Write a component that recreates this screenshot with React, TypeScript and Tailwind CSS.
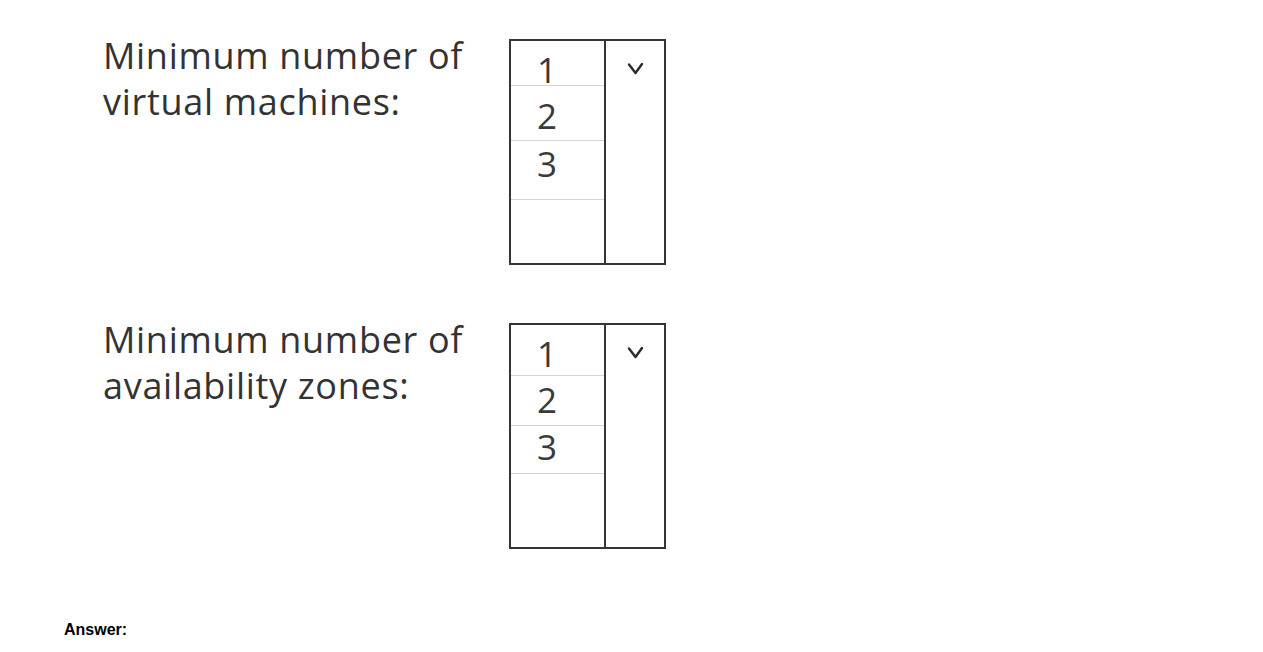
import React from 'react';

type Row = { h: number; pad: number };

type Question = {
  label: [string, string];
  options: string[];
  rows: Row[]; // height and digit offset of each cell in the option column
};

const QUESTIONS: Question[] = [
  {
    label: ['Minimum number of', 'virtual machines:'],
    options: ['1', '2', '3'],
    rows: [
      { h: 45, pad: 11 },
      { h: 55, pad: 12 },
      { h: 59, pad: 5 },
      { h: 63, pad: 0 },
    ],
  },
  {
    label: ['Minimum number of', 'availability zones:'],
    options: ['1', '2', '3'],
    rows: [
      { h: 51, pad: 11 },
      { h: 50, pad: 6 },
      { h: 48, pad: 3 },
      { h: 72, pad: 0 },
    ],
  },
];

function Chevron() {
  return (
    <svg width="17" height="13" viewBox="0 0 17 13" className="text-[#2a2a2a]">
      <path d="M2 2.5 L8.5 11 L15 2" fill="none" stroke="currentColor" strokeWidth="2.4" strokeLinecap="round" strokeLinejoin="round" />
    </svg>
  );
}

function OptionBox({ q }: { q: Question }) {
  return (
    <div className="flex w-[157px] h-[226px] border-2 border-[#353535]">
      <div className="w-[95px] flex flex-col border-r-2 border-[#353535]">
        {q.rows.map((r, i) => (
          <div
            key={i}
            style={{ height: r.h, paddingTop: r.pad }}
            className={`shrink-0 pl-[26px] text-[35px] leading-none text-[#3a3a3a] ${i < q.rows.length - 1 ? 'border-b border-[#d4d4d4]' : ''}`}
          >
            {q.options[i] ?? ''}
          </div>
        ))}
      </div>
      <div className="flex-1 flex justify-center pt-[21px]">
        <Chevron />
      </div>
    </div>
  );
}

export default function App() {
  return (
    <div className="min-h-screen bg-white font-['Open_Sans',sans-serif]">
      <div className="pl-[103px] pt-[39px] flex flex-col gap-[58px]">
        {QUESTIONS.map((q, i) => (
          <div key={i} className="flex">
            <div className="w-[406px] text-[36px] tracking-[0.7px] leading-[46px] text-[#333] -mt-[6px]">
              <div>{q.label[0]}</div>
              <div>{q.label[1]}</div>
            </div>
            <OptionBox q={q} />
          </div>
        ))}
      </div>
      <div className="pl-[64px] pt-[72px] font-['Liberation_Sans',Arial,sans-serif] font-bold text-[16px] leading-[18px] text-black">
        Answer:
      </div>
    </div>
  );
}
